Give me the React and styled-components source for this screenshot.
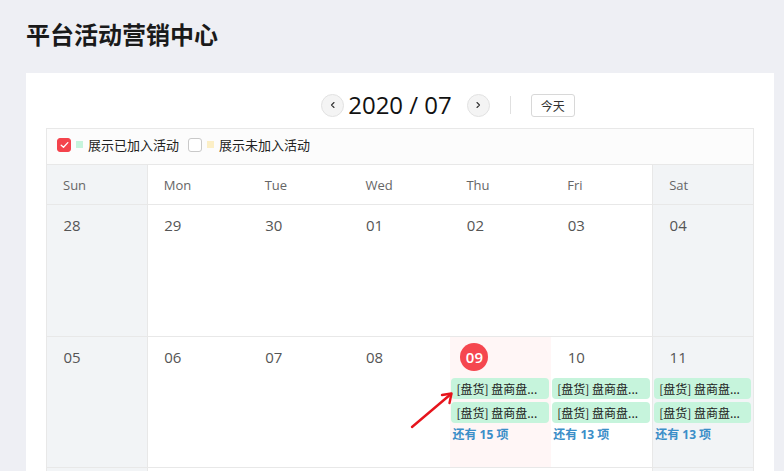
import React from "react";
import styled, { createGlobalStyle } from "styled-components";

const GlobalStyle = createGlobalStyle`
  html, body { margin: 0; padding: 0; background: #eeeff4; }
  body { font-family: "Open Sans", "Noto Sans CJK SC", sans-serif; color: #333; overflow: hidden; }
  * { box-sizing: border-box; }
`;

const Page = styled.div`
  padding: 18px 10px 0 26px;
  height: 471px;
  overflow: hidden;
`;

const Title = styled.h1`
  margin: 0 0 23px 0;
  font-size: 24px;
  line-height: 32px;
  font-weight: 700;
  color: #1a1a1a;
  font-family: "Noto Sans CJK SC", sans-serif;
`;

const Card = styled.div`
  background: #fff;
  padding: 16px 20px 20px 20px;
`;

const Nav = styled.div`
  display: grid;
  grid-template-columns: 1fr auto 1fr;
  align-items: center;
  height: 32px;
  margin-bottom: 7px;
`;

const NavSide = styled.div`
  display: flex;
  align-items: center;
  justify-content: ${(p) => (p.$end ? "flex-end" : "flex-start")};
`;

const CircleBtn = styled.button`
  width: 23px;
  height: 23px;
  border-radius: 50%;
  border: 1px solid #e2e2e2;
  background: #f4f4f4;
  display: flex;
  align-items: center;
  justify-content: center;
  padding: 0;
  margin: ${(p) => p.$margin};
  color: #333;
`;

const MonthTitle = styled.div`
  font-size: 24px;
  line-height: 32px;
  color: #111;
  font-weight: 400;
`;

const Divider = styled.span`
  width: 1px;
  height: 18px;
  background: #e0e0e0;
  margin-left: 20px;
`;

const TodayBtn = styled.button`
  margin-left: 20px;
  width: 44px;
  height: 23px;
  border: 1px solid #d8d8d8;
  border-radius: 3px;
  background: #fff;
  font-size: 12px;
  color: #333;
  font-family: "Noto Sans CJK SC", sans-serif;
  padding: 0;
`;

const Table = styled.div`
  border: 1px solid #e8e8e8;
  border-bottom: none;
`;

const Legend = styled.div`
  height: 36px;
  background: #fcfcfc;
  border-bottom: 1px solid #e8e8e8;
  display: flex;
  align-items: center;
  padding: 0 0 4px 10px;
  font-family: "Noto Sans CJK SC", sans-serif;
  font-size: 13px;
  color: #222;
`;

const LegendItem = styled.label`
  display: flex;
  align-items: center;
  margin-right: 9px;
`;

const Box = styled.span`
  width: 14px;
  height: 14px;
  border-radius: 3px;
  display: flex;
  align-items: center;
  justify-content: center;
  background: ${(p) => (p.$checked ? "#f4434c" : "#fff")};
  border: 1px solid ${(p) => (p.$checked ? "#f4434c" : "#c9c9c9")};
`;

const Swatch = styled.span`
  width: 7px;
  height: 7px;
  background: ${(p) => p.$color};
  margin: 0 5px 0 5px;
`;

const WeekGrid = styled.div`
  display: grid;
  grid-template-columns: repeat(7, 1fr);
`;

const HeadCell = styled.div`
  height: 40px;
  border-bottom: 1px solid #e8e8e8;
  display: flex;
  align-items: center;
  padding-left: 16px;
  font-size: 13px;
  color: #666;
  background: ${(p) => (p.$weekend ? "#f2f4f6" : "#fff")};
  border-right: ${(p) => (p.$side === "sun" ? "1px solid #e8e8e8" : "none")};
  border-left: ${(p) => (p.$side === "sat" ? "1px solid #e8e8e8" : "none")};
`;

const DayCell = styled.div`
  position: relative;
  height: 131.5px;
  border-bottom: 1px solid #e8e8e8;
  padding: 6px 2px 0 1px;
  background: ${(p) => (p.$today ? "#fff6f6" : p.$weekend ? "#f2f4f6" : "#fff")};
  border-right: ${(p) => (p.$side === "sun" ? "1px solid #e8e8e8" : "none")};
  border-left: ${(p) => (p.$side === "sat" ? "1px solid #e8e8e8" : "none")};
`;

const DayNum = styled.div`
  width: 28px;
  height: 28px;
  margin-left: ${(p) => (p.$today ? "9px" : "10px")};
  border-radius: 50%;
  display: flex;
  align-items: center;
  justify-content: center;
  font-size: 15px;
  color: ${(p) => (p.$today ? "#fff" : "#555")};
  background: ${(p) => (p.$today ? "#f5474f" : "transparent")};
  font-weight: ${(p) => (p.$today ? 600 : 400)};
`;

const Events = styled.div`
  margin-top: 7px;
  display: flex;
  flex-direction: column;
  gap: 3px;
`;

const EventPill = styled.div`
  height: 21px;
  border-radius: 4px;
  background: #c6f4dc;
  font-size: 12px;
  line-height: 21px;
  color: #222;
  padding-left: 5px;
  white-space: nowrap;
  overflow: hidden;
  font-family: "Noto Sans CJK SC", sans-serif;
`;

const More = styled.div`
  margin-top: 4px;
  margin-left: 1px;
  font-size: 12px;
  line-height: 16px;
  font-weight: 700;
  color: #3b8ec8;
  font-family: "Open Sans", "Noto Sans CJK SC", sans-serif;
`;

const Arrow = styled.svg`
  position: absolute;
  left: -46px;
  top: 52px;
  overflow: visible;
  pointer-events: none;
`;

const Chevron = ({ dir }) => (
  <svg width="8" height="8" viewBox="0 0 8 8">
    <path
      d={dir === "left" ? "M5 1.5 L2.5 4 L5 6.5" : "M3 1.5 L5.5 4 L3 6.5"}
      fill="none"
      stroke="#333"
      strokeWidth="1.1"
      strokeLinecap="round"
      strokeLinejoin="round"
    />
  </svg>
);

const Check = () => (
  <svg width="9" height="8" viewBox="0 0 9 8">
    <path d="M1.2 4.2 L3.5 6.3 L7.8 1.6" fill="none" stroke="#fff" strokeWidth="1.3" strokeLinecap="round" strokeLinejoin="round" />
  </svg>
);

const dayNames = ["Sun", "Mon", "Tue", "Wed", "Thu", "Fri", "Sat"];

const weeks = [
  ["28", "29", "30", "01", "02", "03", "04"],
  ["05", "06", "07", "08", "09", "10", "11"],
  [null, null, null, null, null, null, null],
];

const events = {
  "09": 15,
  "10": 13,
  "11": 13,
};

const sideOf = (i) => (i === 0 ? "sun" : i === 6 ? "sat" : undefined);

export default function App() {
  return (
    <>
      <GlobalStyle />
      <Page>
        <Title>平台活动营销中心</Title>
        <Card>
          <Nav>
            <NavSide $end>
              <CircleBtn $margin="0 4px 0 0">
                <Chevron dir="left" />
              </CircleBtn>
            </NavSide>
            <MonthTitle>2020 / 07</MonthTitle>
            <NavSide>
              <CircleBtn $margin="0 0 0 15px">
                <Chevron dir="right" />
              </CircleBtn>
              <Divider />
              <TodayBtn>今天</TodayBtn>
            </NavSide>
          </Nav>
          <Table>
            <Legend>
              <LegendItem>
                <Box $checked>
                  <Check />
                </Box>
                <Swatch $color="#c6f4dc" />
                展示已加入活动
              </LegendItem>
              <LegendItem>
                <Box />
                <Swatch $color="#fcefc6" />
                展示未加入活动
              </LegendItem>
            </Legend>
            <WeekGrid>
              {dayNames.map((d, i) => (
                <HeadCell key={d} $weekend={i === 0 || i === 6} $side={sideOf(i)}>
                  {d}
                </HeadCell>
              ))}
            </WeekGrid>
            {weeks.map((w, wi) => (
              <WeekGrid key={wi}>
                {w.map((d, i) => {
                  const today = wi === 1 && d === "09";
                  const count = wi === 1 ? events[d] : undefined;
                  return (
                    <DayCell key={i} $weekend={i === 0 || i === 6} $side={sideOf(i)} $today={today}>
                      {d && <DayNum $today={today}>{d}</DayNum>}
                      {count && (
                        <>
                          <Events>
                            <EventPill>[盘货] 盘商盘...</EventPill>
                            <EventPill>[盘货] 盘商盘...</EventPill>
                          </Events>
                          <More>还有 {count} 项</More>
                        </>
                      )}
                      {today && (
                        <Arrow width="50" height="42" viewBox="0 0 50 42">
                          <path d="M8 38 L47 5" stroke="#e6141c" strokeWidth="2.4" strokeLinecap="round" fill="none" />
                          <path d="M38 6 L47.5 4.5 L45.5 14" stroke="#e6141c" strokeWidth="2.4" strokeLinecap="round" strokeLinejoin="round" fill="none" />
                        </Arrow>
                      )}
                    </DayCell>
                  );
                })}
              </WeekGrid>
            ))}
          </Table>
        </Card>
      </Page>
    </>
  );
}
